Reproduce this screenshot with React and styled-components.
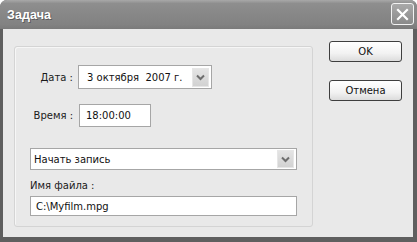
import React from "react";
import styled, { createGlobalStyle } from "styled-components";

const GlobalStyle = createGlobalStyle`
  html, body {
    margin: 0;
    padding: 0;
    background: #ffffff;
  }
  body {
    font-family: "DejaVu Sans", Tahoma, sans-serif;
    font-size: 10px;
    color: #111;
  }
`;

const Window = styled.div`
  width: 417px;
  height: 242px;
  display: flex;
  flex-direction: column;
  box-sizing: border-box;
  background: #5f5f5f;
  border-radius: 7px 7px 0 0;
  overflow: hidden;
`;

const TitleBar = styled.div`
  height: 29px;
  flex: none;
  display: flex;
  align-items: center;
  justify-content: space-between;
  padding: 0 3px 0 7px;
  background: linear-gradient(#a8a8a8 0%, #8e8e8e 12%, #878787 50%, #828282 85%, #7a7a7a 100%);
`;

const Title = styled.span`
  font-family: "Liberation Sans", Arial, sans-serif;
  color: #fff;
  font-weight: bold;
  font-size: 12.5px;
  letter-spacing: 0.1px;
  text-shadow: 1px 1px 0 #5a5a5a;
`;

const CloseButton = styled.div`
  width: 21px;
  height: 20px;
  border: 1px solid #f2f2f2;
  border-radius: 3px;
  background: linear-gradient(#a9a9a9, #8a8a8a);
  display: flex;
  align-items: center;
  justify-content: center;
  margin-top: -1px;
`;

const Body = styled.div`
  flex: 1;
  margin: 0 4px 5px 3px;
  background: #e9e9e9;
  display: flex;
  align-items: flex-start;
  padding: 17px 0 0 11px;
`;

const GroupBox = styled.div`
  width: 299px;
  height: 181px;
  box-sizing: border-box;
  border: 1px solid #d4d4d4;
  border-radius: 3px;
  box-shadow: inset 1px 1px 0 #f6f6f6;
  padding: 18px 15px 0 15px;
  display: flex;
  flex-direction: column;
`;

const Row = styled.div`
  display: flex;
  align-items: center;
  margin-top: ${(p) => p.$top || 0}px;
`;

const Label = styled.div`
  width: 43px;
  text-align: right;
  margin-right: ${(p) => p.$gap}px;
  white-space: nowrap;
  color: #1a1a1a;
`;

const Field = styled.div`
  box-sizing: border-box;
  width: ${(p) => (p.$width ? `${p.$width}px` : "100%")};
  height: ${(p) => p.$height}px;
  background: #fff;
  border: 1px solid #a6a6a6;
  display: flex;
  align-items: center;
  padding-left: ${(p) => p.$pad}px;
  padding-right: 2px;
  color: #111;
`;

const FieldText = styled.span`
  flex: 1;
  white-space: pre;
`;

const DropButton = styled.div`
  width: 15px;
  height: ${(p) => p.$height}px;
  background: linear-gradient(#e4e4e4, #d2d2d2);
  border: 1px solid #e6e6e6;
  display: flex;
  align-items: center;
  justify-content: center;
`;

const SmallLabel = styled.div`
  margin-top: 10px;
  margin-bottom: 5px;
  color: #1a1a1a;
`;

const ButtonColumn = styled.div`
  margin-left: 16px;
  margin-top: -5px;
  display: flex;
  flex-direction: column;
  gap: 18px;
`;

const Button = styled.div`
  width: 73px;
  height: 21px;
  box-sizing: border-box;
  border: 1px solid #3e3e3e;
  border-radius: 3px;
  background: linear-gradient(#ffffff 0%, #f2f2f2 60%, #dcdcdc 100%);
  display: flex;
  align-items: center;
  justify-content: center;
  color: #111;
`;

const Chevron = () => (
  <svg width="9" height="7" viewBox="0 0 9 7">
    <path d="M1 1.5 L4.5 5 L8 1.5" fill="none" stroke="#6e6e6e" strokeWidth="2" />
  </svg>
);

const CloseIcon = () => (
  <svg width="13" height="13" viewBox="0 0 13 13">
    <path d="M2 2 L11 11 M11 2 L2 11" stroke="#fff" strokeWidth="2.2" strokeLinecap="square" />
  </svg>
);

export default function App() {
  return (
    <>
      <GlobalStyle />
      <Window>
        <TitleBar>
          <Title>Задача</Title>
          <CloseButton>
            <CloseIcon />
          </CloseButton>
        </TitleBar>
        <Body>
          <GroupBox>
            <Row>
              <Label $gap={5}>Дата :</Label>
              <Field $width={134} $height={24} $pad={8}>
                <FieldText>3 октября  2007 г.</FieldText>
                <DropButton $height={17}>
                  <Chevron />
                </DropButton>
              </Field>
            </Row>
            <Row $top={15}>
              <Label $gap={6}>Время :</Label>
              <Field $width={72} $height={23} $pad={6}>
                <FieldText>18:00:00</FieldText>
              </Field>
            </Row>
            <Row $top={21}>
              <Field $height={22} $pad={3}>
                <FieldText>Начать запись</FieldText>
                <DropButton $height={16}>
                  <Chevron />
                </DropButton>
              </Field>
            </Row>
            <SmallLabel>Имя файла :</SmallLabel>
            <Field $height={20} $pad={5}>
              <FieldText>C:\Myfilm.mpg</FieldText>
            </Field>
          </GroupBox>
          <ButtonColumn>
            <Button>OK</Button>
            <Button>Отмена</Button>
          </ButtonColumn>
        </Body>
      </Window>
    </>
  );
}
